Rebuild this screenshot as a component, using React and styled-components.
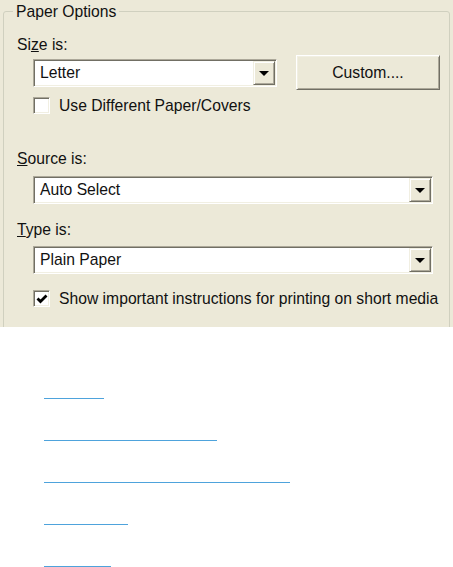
import styled, { createGlobalStyle } from "styled-components";

const GlobalStyle = createGlobalStyle`
  html, body {
    margin: 0;
    padding: 0;
    background: #fff;
    overflow: hidden;
  }
  body {
    font-family: "Liberation Sans", Arial, sans-serif;
    color: #111;
  }
`;

const Panel = styled.div`
  background: #ece9d8;
  height: 327px;
  padding: 3px 3px 0;
  box-sizing: border-box;
  overflow: hidden;
`;

const GroupBox = styled.fieldset`
  margin: 0;
  padding: 0 10px 0 13px;
  min-width: 0;
  height: 400px;
  border: 1px solid #d0d0bf;
  border-radius: 3px;
  display: flex;
  flex-direction: column;
  align-items: flex-start;
`;

const Legend = styled.legend`
  margin-left: -4px;
  padding: 0 3px;
  font-size: 15.7px;
  line-height: 17px;
`;

const FieldLabel = styled.div`
  font-size: 15.7px;
  line-height: 18px;
  margin-top: ${({ $top }) => $top}px;
`;

const Row = styled.div`
  display: flex;
  align-items: center;
  margin-top: ${({ $top }) => $top}px;
  margin-left: 16px;
`;

const Combo = styled.div`
  width: ${({ $width }) => $width}px;
  height: 28px;
  box-sizing: border-box;
  display: flex;
  align-items: stretch;
  background: #fff;
  border: 1px solid;
  border-color: #aca899 #fff #fff #aca899;
  box-shadow: inset 1px 1px #716f64, inset -1px -1px #f1efe2;
  padding: 1px;
`;

const ComboValue = styled.span`
  flex: 1;
  font-size: 15.7px;
  line-height: 24px;
  padding-left: 5px;
`;

const ArrowButton = styled.span`
  width: 22px;
  box-sizing: border-box;
  background: #ece9d8;
  border: 1px solid;
  border-color: #f1efe2 #716f64 #716f64 #f1efe2;
  box-shadow: inset 1px 1px #fff, inset -1px -1px #aca899;
  display: flex;
  align-items: center;
  justify-content: center;

  &::after {
    content: "";
    border-left: 5px solid transparent;
    border-right: 5px solid transparent;
    border-top: 5px solid #000;
    margin-top: 1px;
  }
`;

const PushButton = styled.button`
  margin-left: 19px;
  width: 144px;
  height: 35px;
  box-sizing: border-box;
  background: #ece9d8;
  border: 1px solid;
  border-color: #fff #716f64 #716f64 #fff;
  box-shadow: inset 1px 1px #f1efe2, inset -1px -1px #aca899;
  font-family: "Liberation Sans", Arial, sans-serif;
  font-size: 15.7px;
  color: #111;
  padding: 0;
`;

const CheckRow = styled.label`
  display: flex;
  align-items: center;
  gap: 9px;
  margin-top: ${({ $top }) => $top}px;
  margin-left: 16px;
  font-size: 15.7px;
  line-height: 17px;
  white-space: nowrap;
`;

const CheckBox = styled.span`
  width: 17px;
  height: 17px;
  box-sizing: border-box;
  background: #fff;
  border: 1px solid;
  border-color: #aca899 #fff #fff #aca899;
  box-shadow: inset 1px 1px #716f64, inset -1px -1px #f1efe2;
  display: flex;
  align-items: center;
  justify-content: center;
  flex: none;
`;

const LinkList = styled.ul`
  list-style: none;
  margin: 0;
  padding: 51px 0 0 44px;
  display: flex;
  flex-direction: column;
  gap: 21px;
`;

const LinkItem = styled.li`
  margin: 0;
  padding: 0;
`;

const BlankLink = styled.a`
  display: block;
  width: ${({ $width }) => $width}px;
  height: 20px;
  border-bottom: 1px solid #4ea3dc;
`;

const links = [60, 173, 246, 84, 67];

function Check() {
  return (
    <svg width="12" height="12" viewBox="0 0 12 12">
      <polyline
        points="1.5,5.5 4.5,8.5 10.5,2.5"
        fill="none"
        stroke="#000"
        strokeWidth="2.8"
      />
    </svg>
  );
}

export default function App() {
  return (
    <>
      <GlobalStyle />
      <Panel>
        <GroupBox>
          <Legend>Paper Options</Legend>
          <FieldLabel $top={16}>
            Si<u>z</u>e is:
          </FieldLabel>
          <Row $top={1}>
            <Combo $width={244}>
              <ComboValue>Letter</ComboValue>
              <ArrowButton />
            </Combo>
            <PushButton type="button">Custom....</PushButton>
          </Row>
          <CheckRow $top={7}>
            <CheckBox />
            Use Different Paper/Covers
          </CheckRow>
          <FieldLabel $top={36}>
            <u>S</u>ource is:
          </FieldLabel>
          <Row $top={8}>
            <Combo $width={400}>
              <ComboValue>Auto Select</ComboValue>
              <ArrowButton />
            </Combo>
          </Row>
          <FieldLabel $top={17}>
            <u>T</u>ype is:
          </FieldLabel>
          <Row $top={7}>
            <Combo $width={400}>
              <ComboValue>Plain Paper</ComboValue>
              <ArrowButton />
            </Combo>
          </Row>
          <CheckRow $top={16}>
            <CheckBox>
              <Check />
            </CheckBox>
            Show important instructions for printing on short media
          </CheckRow>
        </GroupBox>
      </Panel>
      <LinkList>
        {links.map((w, i) => (
          <LinkItem key={i}>
            <BlankLink href="#" $width={w} />
          </LinkItem>
        ))}
      </LinkList>
    </>
  );
}
